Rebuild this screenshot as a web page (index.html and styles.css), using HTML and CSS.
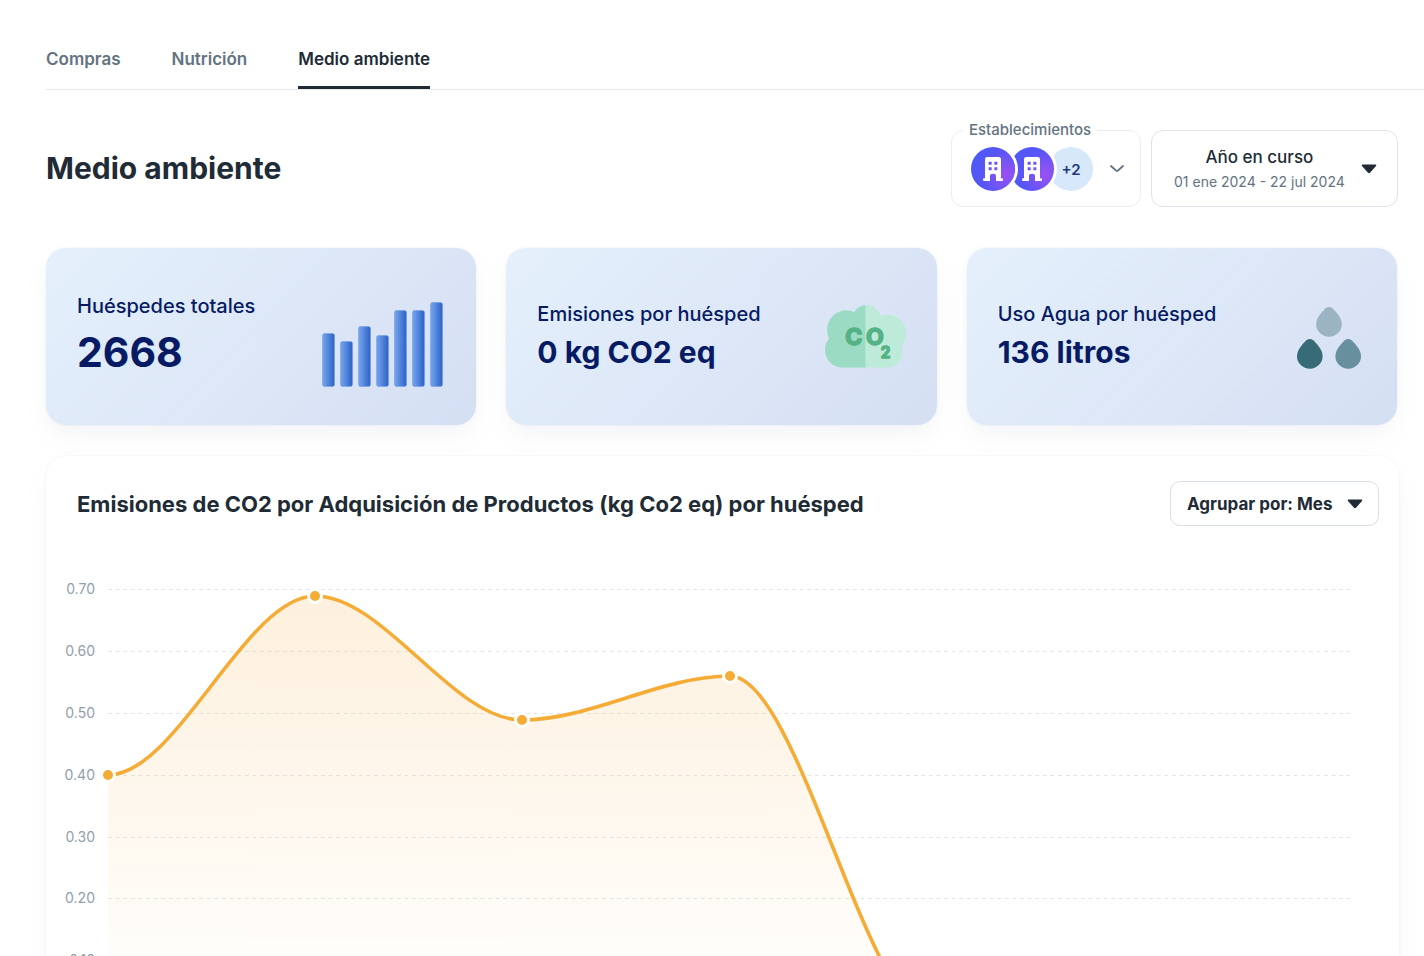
FILE: index.html
```html
<!DOCTYPE html>
<html lang="es">
<head>
<meta charset="utf-8">
<meta name="viewport" content="width=device-width, initial-scale=1">
<title>Medio ambiente</title>
<link rel="stylesheet" href="styles.css">
</head>
<body>
<svg class="defs" width="0" height="0" aria-hidden="true">
  <defs>
    <symbol id="building" viewBox="0 0 60 72">
      <path fill="#fff" fill-rule="evenodd" d="M13 0H47Q54 0 54 7V64H57Q60 64 60 68T57 72H39V57Q39 50 30 50T21 57V72H3Q0 72 0 68T3 64H6V7Q6 0 13 0ZM17 14V23H26V14ZM34 14V23H43V14ZM17 31V40H26V31ZM34 31V40H43V31Z"/>
    </symbol>
    <symbol id="caret" viewBox="0 0 16 10">
      <path fill="#212b36" d="M1.500 .5H14.500Q16 .8 15 2L9 8.700Q8 9.600 7 8.700L1 2Q0 .8 1.500 .5Z"/>
    </symbol>
  </defs>
</svg>
<main class="page">
  <nav class="tabs">
    <a class="tab" href="#compras">Compras</a>
    <a class="tab" href="#nutricion">Nutrición</a>
    <a class="tab tab-active" href="#medio-ambiente" aria-current="page">Medio ambiente</a>
  </nav>
  <div class="content">
    <header class="page-head">
      <h1 class="title">Medio ambiente</h1>
      <div class="filters">
        <fieldset class="sites">
          <legend class="sites-legend">Establecimientos</legend>
          <button class="sites-button" type="button" aria-label="Establecimientos">
            <span class="avatars">
              <span class="avatar avatar-first"><svg class="building"><use href="#building"/></svg></span>
              <span class="avatar avatar-second"><svg class="building"><use href="#building"/></svg></span>
              <span class="avatar avatar-more">+2</span>
            </span>
            <svg class="chevron" viewBox="0 0 14 8"><path d="M1 1L6 5.500Q7 6.300 8 5.500L13 1" fill="none" stroke="#637381" stroke-width="1.800" stroke-linecap="round"/></svg>
          </button>
        </fieldset>
        <button class="period" type="button">
          <span class="period-text">
            <span class="period-name">Año en curso</span>
            <span class="period-range">01 ene 2024 - 22 jul 2024</span>
          </span>
          <svg class="caret"><use href="#caret"/></svg>
        </button>
      </div>
    </header>
    <section class="cards">
      <article class="card">
        <div>
          <h2 class="card-label">Huéspedes totales</h2>
          <p class="card-value card-value-large">2668</p>
        </div>
        <svg class="icon-bars" viewBox="0 0 122 85">
          <defs><linearGradient id="bar"><stop offset="0" stop-color="#77a5eb"/><stop offset="1" stop-color="#2c62c8"/></linearGradient></defs>
          <g fill="url(#bar)" stroke="#6a9ae6" stroke-opacity=".5">
            <rect x=".5" y="31.500" width="12" height="53" rx="2"/>
            <rect x="18.500" y="39.500" width="12" height="45" rx="2"/>
            <rect x="36.500" y="24.500" width="12" height="60" rx="2"/>
            <rect x="54.500" y="33.500" width="12" height="51" rx="2"/>
            <rect x="72.500" y="8.500" width="12" height="76" rx="2"/>
            <rect x="90.500" y="8.500" width="12" height="76" rx="2"/>
            <rect x="108.500" y=".5" width="12" height="84" rx="2"/>
          </g>
        </svg>
      </article>
      <article class="card">
        <div>
          <h2 class="card-label">Emisiones por huésped</h2>
          <p class="card-value">0 kg CO2 eq</p>
        </div>
        <svg class="icon-cloud" viewBox="75 75 246 189">
          <defs>
            <clipPath id="cloud">
              <circle cx="140" cy="150" r="59"/><circle cx="128" cy="210" r="53"/><circle cx="200" cy="118" r="43"/><circle cx="263" cy="160" r="56"/><circle cx="262" cy="217" r="46"/><rect x="128" y="120" width="134" height="143"/>
            </clipPath>
          </defs>
          <g clip-path="url(#cloud)">
            <rect x="70" y="70" width="127" height="200" fill="#9bdbc3"/>
            <rect x="197" y="70" width="130" height="200" fill="#beebd9"/>
          </g>
          <g class="cloud-text"><text x="136" y="194" font-size="69" stroke-width="5">C</text><text x="198" y="194" font-size="69" stroke-width="5">O</text><text x="242" y="235" font-size="46" stroke-width="4">2</text></g>
        </svg>
      </article>
      <article class="card">
        <div>
          <h2 class="card-label">Uso Agua por huésped</h2>
          <p class="card-value">136 litros</p>
        </div>
        <svg class="icon-drops" viewBox="81 81 190 184">
          <defs><path id="drop" d="M28 4Q38 -4 48 4C62 17 76 34 76 51A38 37 0 0 1 0 51C0 34 14 17 28 4Z"/></defs>
          <use href="#drop" x="138" y="81" fill="#9ab4c3"/>
          <use href="#drop" x="81" y="176" fill="#366b77"/>
          <use href="#drop" x="195" y="176" fill="#688f9e"/>
        </svg>
      </article>
    </section>
    <section class="panel">
      <header class="panel-head">
        <h2 class="panel-title">Emisiones de CO2 por Adquisición de Productos (kg Co2 eq) por huésped</h2>
        <div class="group">
          <select class="group-select" aria-label="Agrupar por">
            <option>Agrupar por: Mes</option>
            <option>Agrupar por: Semana</option>
          </select>
          <svg class="caret group-caret"><use href="#caret"/></svg>
        </div>
      </header>
      <svg class="chart" viewBox="0 0 1353 500" role="img" aria-label="Emisiones de CO2 por huésped">
        <defs><linearGradient id="area" x1="0" y1="0" x2="0" y2="1"><stop offset="0" stop-color="#f5a637" stop-opacity=".17"/><stop offset="1" stop-color="#f5ac37" stop-opacity="0"/></linearGradient></defs>
        <g stroke="#e3e6e9" stroke-dasharray="4 3.600">
          <path d="M62 33.500H1304M62 95.500H1304M62 157.500H1304M62 219.500H1304M62 281.500H1304M62 342.500H1304M62 404.500H1304M62 466.500H1304"/>
        </g>
        <path fill="url(#area)" d="M62 219C131 219 200 40 269 40S407 164 476 164S615 120 684 120S822 466 891 466H62Z"/>
        <path fill="none" stroke="#f5ac37" stroke-width="3.600" d="M62 219C131 219 200 40 269 40S407 164 476 164S615 120 684 120S822 466 891 466H1304"/>
        <g fill="#f5ac37" stroke="#fff" stroke-width="3">
          <circle cx="62" cy="219" r="6.500"/><circle cx="269" cy="40" r="6.500"/><circle cx="476" cy="164" r="6.500"/><circle cx="684" cy="120" r="6.500"/>
        </g>
        <g class="axis">
          <text x="49" y="38">0.70</text><text x="49" y="100">0.60</text><text x="49" y="162">0.50</text><text x="49" y="224">0.40</text><text x="49" y="286">0.30</text><text x="49" y="347">0.20</text><text x="49" y="409">0.10</text><text x="49" y="471">0.00</text>
        </g>
      </svg>
    </section>
  </div>
</main>
</body>
</html>
```
FILE: styles.css
```css
* { box-sizing: border-box; }
body {
  margin: 0;
  height: 100vh;
  overflow: hidden;
  background: #fff;
  color: #212b36;
  font-family: Inter, "Liberation Sans", sans-serif;
}
h1, h2, p { margin: 0; }
button, select { font: inherit; color: inherit; cursor: pointer; }
svg { flex: none; }
.defs { position: absolute; }
.page { padding: 30px 0 0 46px; }
.tabs {
  display: flex;
  gap: 51px;
  border-bottom: 1px solid #e6e9ec;
}
.tab {
  height: 59px;
  line-height: 58px;
  font-size: 17px;
  font-weight: 600;
  color: #637381;
  text-decoration: none;
}
.tab-active {
  color: #212b36;
  border-bottom: 3px solid #212b36;
}
.content { padding-right: 25px; }
.page-head {
  display: flex;
  align-items: flex-end;
  justify-content: space-between;
  padding: 30px 1px 41px 0;
}
.title { font-size: 30px; line-height: 77px; font-weight: 700; }
.filters { display: flex; gap: 10px; align-items: flex-end; }
.sites {
  margin: 0;
  padding: 0 11px;
  width: 190px;
  height: 87px;
  border: 1px solid #e9edf0;
  border-radius: 12px;
}
.sites-legend {
  padding: 0 6px;
  font-size: 15px;
  line-height: 20px;
  font-weight: 500;
  color: #637381;
}
.sites-button {
  display: flex;
  align-items: center;
  justify-content: space-between;
  width: 100%;
  height: 58px;
  padding: 0 5px 0 8px;
  border: 0;
  background: none;
}
.avatars { display: flex; }
.avatar {
  display: flex;
  align-items: center;
  justify-content: center;
  position: relative;
  width: 44px;
  height: 44px;
  border-radius: 50%;
  background: radial-gradient(circle at 80% 62%, #9c50f2 0%, #7a54f4 26%, #5755f6 55%, #445ff5 100%);
}
.avatar + .avatar { margin-left: -5px; }
.avatar-first { z-index: 2; box-shadow: 0 0 0 3px #fff; }
.avatar-second { z-index: 1; box-shadow: 0 0 0 3px #fff; }
.avatar-more { background: #d6e8fa; color: #1c3784; font-size: 15px; font-weight: 600; }
.building { width: 20px; height: 24px; }
.chevron { width: 14px; height: 8px; }
.caret { width: 16px; height: 10px; }
.period {
  display: flex;
  align-items: center;
  justify-content: space-between;
  width: 247px;
  height: 77px;
  padding: 0 20px 0 22px;
  border: 1px solid #dfe3e8;
  border-radius: 12px;
  background: #fff;
}
.period-text { display: flex; flex-direction: column; align-items: center; white-space: nowrap; }
.period-name { font-size: 17px; line-height: 26px; font-weight: 500; }
.period-range { font-size: 14px; line-height: 24px; color: #637381; }
.cards { display: grid; grid-template-columns: repeat(3, 1fr); gap: 30px; padding-right: 2px; }
.card {
  display: flex;
  align-items: center;
  justify-content: space-between;
  height: 177px;
  padding: 0 30px 0 31px;
  border-radius: 20px;
  background: linear-gradient(135deg, #e5f0fc, #d5dff3);
  box-shadow: 0 0 2px rgba(145, 158, 171, .2), 0 12px 24px -4px rgba(145, 158, 171, .12);
  color: #061b64;
  white-space: nowrap;
}
.card-label { font-size: 20px; line-height: 30px; font-weight: 500; }
.card-value { font-size: 30px; line-height: 46px; font-weight: 700; }
.card-value-large { font-size: 41px; line-height: 62px; }
.icon-bars { width: 122px; height: 85px; margin: 16px 2px 0 0; }
.icon-cloud { width: 82px; height: 63px; }
.cloud-text { fill: #55b285; stroke: #55b285; stroke-linejoin: round; font-weight: 700; }
.icon-drops { width: 64px; height: 62px; margin: 2px 6px 0 0; }
.panel {
  margin-top: 31px;
  border-radius: 20px;
  background: #fff;
  box-shadow: 0 0 2px rgba(145, 158, 171, .2), 0 12px 24px -4px rgba(145, 158, 171, .12);
}
.panel-head {
  display: flex;
  align-items: center;
  justify-content: space-between;
  padding: 25px 20px 30px 31px;
}
.panel-title { font-size: 22px; line-height: 30px; font-weight: 700; }
.group { position: relative; }
.group-select {
  display: block;
  appearance: none;
  width: 209px;
  height: 45px;
  padding: 0 40px 0 16px;
  border: 1px solid #d8dee4;
  border-radius: 10px;
  background: #fff;
  font-size: 17px;
  font-weight: 700;
}
.group-caret { position: absolute; right: 16px; top: 18px; pointer-events: none; }
.chart { display: block; width: 100%; height: auto; }
.axis { font-size: 14px; fill: #919eab; text-anchor: end; }
```
